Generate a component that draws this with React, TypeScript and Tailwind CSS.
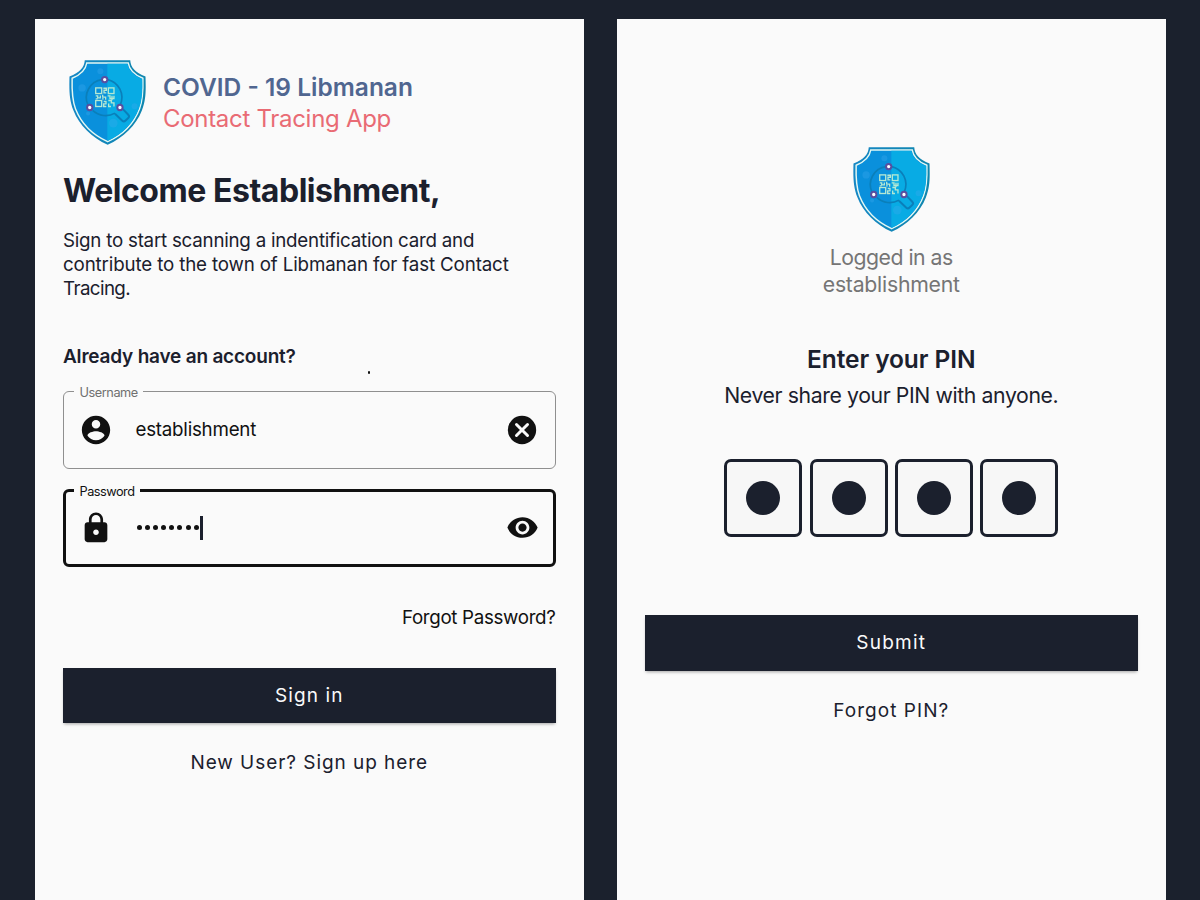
import type { ReactNode } from "react";

function ShieldLogo() {
  return (
    <svg viewBox="27 29 231 256" className="block h-[85px] w-[77px] shrink-0" aria-hidden="true">
      <defs>
        <clipPath id="shield-right">
          <rect x="142" y="29" width="120" height="260" />
        </clipPath>
        <linearGradient id="shield-edge" x1="0" x2="1">
          <stop offset="0" stopColor="#1687c4" />
          <stop offset="1" stopColor="#0f86ae" />
        </linearGradient>
      </defs>
      <path
        d="M74 30H211C212 51 226 67 257 79C258 120 259 148 246 181C229 225 190 264 143 284C96 264 57 225 40 181C27 148 27 120 28 79C59 67 73 51 74 30Z"
        fill="url(#shield-edge)"
      />
      <path
        d="M80 38H205C208 58 222 73 249 84C250 120 250 147 239 176C223 219 188 255 143 275C98 255 63 219 46 176C35 147 35 120 36 84C63 73 77 58 80 38Z"
        fill="#0a90dc"
        stroke="#e4f8f4"
        strokeWidth="4.4"
      />
      <path
        d="M82 40H203C206 60 220 75 247 86C248 120 248 147 237 175C221 217 187 253 143 273C99 253 65 217 48 175C37 147 37 120 38 86C65 75 79 60 82 40Z"
        fill="#08abe4"
        clipPath="url(#shield-right)"
      />
      <g fill="#3da9ee" opacity="0.35">
        <circle cx="66" cy="113" r="11" />
        <circle cx="121" cy="63" r="9" />
        <circle cx="224" cy="168" r="9" />
        <circle cx="160" cy="219" r="13" />
        <circle cx="84" cy="190" r="6" />
      </g>
      <g fill="none" stroke="#0a7fba" strokeWidth="5">
        <path d="M126 88A55 55 0 0 0 84 166M98 181A56 56 0 0 0 165 189M143 88A55 55 0 0 1 181 164" />
        <path d="M165 191L187 212Q192 216 197 211L205 204Q210 199 205 194L189 177" strokeWidth="6" />
      </g>
      <g fill="none" stroke="#b5e8d3" strokeWidth="4">
        <rect x="107" y="113" width="18" height="17" />
        <rect x="145" y="113" width="17" height="17" />
        <rect x="107" y="151" width="18" height="18" />
        <path d="M130 114H139V120H132V128H139M107 137H113V143H121V136M128 134V141H137V149M143 137H150V145H162V137M131 154H138V161H131V169H139M145 151H154V158H162V169M146 160V169H153M107 146H113M156 137V150M126 146H131" />
      </g>
      <g fill="#fff" stroke="#594fa0" strokeWidth="6">
        <circle cx="134" cy="88" r="8" />
        <circle cx="89" cy="172" r="8" />
        <circle cx="180" cy="172" r="8" />
      </g>
    </svg>
  );
}

function AccountIcon() {
  return (
    <svg viewBox="0 0 24 24" className="size-[34px] shrink-0" fill="currentColor">
      <path d="M12 2C6.48 2 2 6.48 2 12s4.48 10 10 10 10-4.48 10-10S17.52 2 12 2zm0 3c1.66 0 3 1.34 3 3s-1.34 3-3 3-3-1.34-3-3 1.34-3 3-3zm0 14.2c-2.5 0-4.71-1.28-6-3.22.03-1.99 4-3.08 6-3.08 1.99 0 5.97 1.09 6 3.08-1.29 1.94-3.5 3.22-6 3.22z" />
    </svg>
  );
}

function LockIcon() {
  return (
    <svg viewBox="0 0 24 24" className="size-[34px] shrink-0" fill="currentColor">
      <path d="M18 8h-1V6c0-2.76-2.24-5-5-5S7 3.24 7 6v2H6c-1.1 0-2 .9-2 2v10c0 1.1.9 2 2 2h12c1.1 0 2-.9 2-2V10c0-1.1-.9-2-2-2zm-6 9c-1.1 0-2-.9-2-2s.9-2 2-2 2 .9 2 2-.9 2-2 2zm3.1-9H8.9V6c0-1.71 1.39-3.1 3.1-3.1s3.1 1.39 3.1 3.1v2z" />
    </svg>
  );
}

function ClearIcon() {
  return (
    <svg viewBox="0 0 24 24" className="size-[34px] shrink-0">
      <circle cx="12" cy="12" r="10" fill="currentColor" />
      <path d="M8.1 8.1l7.8 7.8M15.9 8.1l-7.8 7.8" stroke="#fafafa" strokeWidth="2.1" strokeLinecap="round" />
    </svg>
  );
}

function EyeIcon() {
  return (
    <svg viewBox="0 0 24 24" className="size-[33px] shrink-0" fill="currentColor">
      <path d="M12 4.5C7 4.5 2.73 7.61 1 12c1.73 4.39 6 7.5 11 7.500s9.27-3.11 11-7.5c-1.73-4.39-6-7.5-11-7.5zM12 17c-2.76 0-5-2.24-5-5s2.24-5 5-5 5 2.24 5 5-2.24 5-5 5zm0-8c-1.66 0-3 1.34-3 3s1.34 3 3 3 3-1.34 3-3-1.34-3-3-3z" />
    </svg>
  );
}

function Phone({ children }: { children: ReactNode }) {
  return (
    <section className="relative flex h-[881px] w-[548.5px] shrink-0 flex-col bg-[#fafafa] px-7">
      {children}
    </section>
  );
}

function PrimaryButton({ className, children }: { className: string; children: ReactNode }) {
  return (
    <button
      className={`h-[55.5px] w-full shrink-0 bg-[#1b202d] text-center text-[19px] leading-[56px] text-[#fafafa] shadow-[0_2px_3px_-1px_rgba(0,0,0,0.35)] ${className}`}
    >
      {children}
    </button>
  );
}

function PinCell() {
  return (
    <div className="flex size-[78px] items-center justify-center rounded-[7px] border-3 border-[#1b202d] bg-[#f7f7f7]">
      <div className="size-[34px] rounded-full bg-[#1b202d]" />
    </div>
  );
}

function SignInScreen() {
  return (
    <Phone>
      <header className="mt-[41px] flex h-[85px] items-start pl-1.5">
        <ShieldLogo />
        <div className="ml-[17px] pt-[11.5px] leading-[31px] whitespace-nowrap">
          <p className="text-[24.5px] font-semibold text-[#506690]">COVID - 19 Libmanan</p>
          <p className="text-[24px] tracking-[-0.3px] text-[#e96b74]">Contact Tracing App</p>
        </div>
      </header>

      <h1 className="mt-[25.5px] text-[32px] leading-10 font-bold tracking-[-0.46px] whitespace-nowrap">
        Welcome Establishment,
      </h1>
      <p className="mt-[18.5px] text-[18.75px] leading-6 whitespace-nowrap">
        <span className="block tracking-[-0.24px]">Sign to start scanning a indentification card and</span>
        <span className="block tracking-[-0.15px]">contribute to the town of Libmanan for fast Contact</span>
        <span className="block tracking-[-0.6px]">Tracing.</span>
      </p>

      <h2 className="mt-[44px] text-[19px] leading-6 font-semibold tracking-[-0.2px]">Already have an account?</h2>
      <span className="absolute top-[352px] left-[333px] h-[2.5px] w-[2px] rounded-full bg-[#111]" />

      <div className="relative mt-[21.5px] flex h-[78px] shrink-0 items-center rounded-md border-[1.5px] border-[#8f8f8f] pr-4 pl-[15px] text-[#111]">
        <span className="absolute -top-[7px] left-[10px] bg-[#fafafa] px-[5.5px] text-[12.75px] leading-4 tracking-[-0.46px] text-[#707070]">
          Username
        </span>
        <AccountIcon />
        <span className="ml-[22.5px] flex-1 pt-px text-[18.75px] leading-6 tracking-[-0.24px]">establishment</span>
        <ClearIcon />
      </div>

      <div className="relative mt-[20px] flex h-[78px] shrink-0 items-center rounded-md border-3 border-[#111] pr-[13.5px] pl-[13px] text-[#111]">
        <span className="absolute -top-[8px] left-[8px] bg-[#fafafa] px-[5.5px] text-[12.75px] leading-4 tracking-[-0.5px]">
          Password
        </span>
        <LockIcon />
        <div className="ml-[24px] flex flex-1 items-center gap-[3.1px]">
          {Array.from({ length: 8 }, (_, i) => (
            <span key={i} className="size-[5px] rounded-full bg-[#111]" />
          ))}
          <span className="-ml-[2px] h-6 w-[3px] bg-[#1b202d]" />
        </div>
        <EyeIcon />
      </div>

      <a className="mt-[39.5px] self-end text-[18.75px] leading-6 tracking-[-0.33px] text-[#111]">Forgot Password?</a>
      <PrimaryButton className="mt-[37.5px] tracking-[1.1px]">Sign in</PrimaryButton>
      <a className="mt-[28px] text-center text-[19px] leading-6 tracking-[0.95px]">New User? Sign up here</a>
    </Phone>
  );
}

function PinScreen() {
  return (
    <Phone>
      <div className="mt-[128px] flex justify-center">
        <ShieldLogo />
      </div>
      <p className="mt-[12px] text-center text-[21.25px] leading-[27px] text-[#757575]">
        <span className="block tracking-[-0.5px]">Logged in as</span>
        <span className="block tracking-[-0.25px]">establishment</span>
      </p>
      <h1 className="mt-[44.5px] text-center text-[24.5px] leading-[32px] font-semibold tracking-[-0.08px]">Enter your PIN</h1>
      <p className="mt-[6px] text-center text-[21.25px] leading-7 tracking-[-0.4px]">Never share your PIN with anyone.</p>
      <div className="mt-[50.5px] flex justify-center gap-[7.4px]">
        <PinCell />
        <PinCell />
        <PinCell />
        <PinCell />
      </div>
      <PrimaryButton className="mt-[78px] tracking-[1.25px]">Submit</PrimaryButton>
      <a className="mt-[28px] text-center text-[19px] leading-6 tracking-[1.05px]">Forgot PIN?</a>
    </Phone>
  );
}

export default function App() {
  return (
    <main className="flex h-[900px] w-[1200px] gap-[33.5px] overflow-hidden bg-[#1b212d] pt-[19px] pl-[35px] font-['Inter',sans-serif] text-[#1b202d]">
      <SignInScreen />
      <PinScreen />
    </main>
  );
}
